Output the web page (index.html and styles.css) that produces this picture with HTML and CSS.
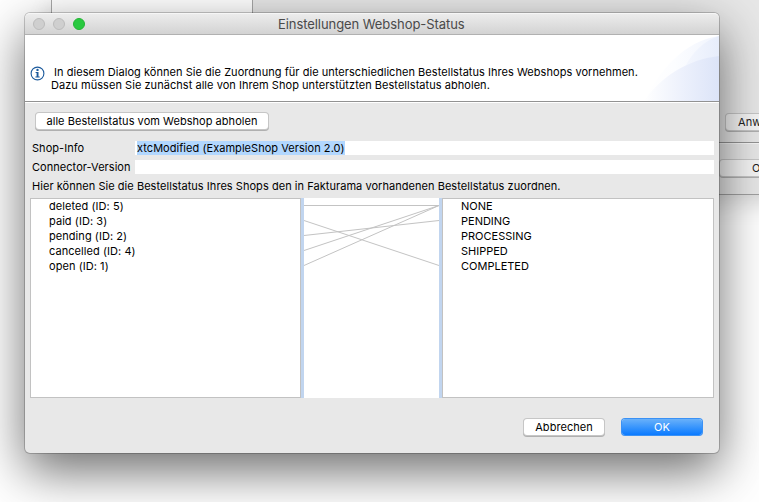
FILE: index.html
```
<!DOCTYPE html>
<html lang="de">
<head>
<meta charset="utf-8">
<title>Einstellungen Webshop-Status</title>
<link rel="stylesheet" href="styles.css">
</head>
<body>
<div class="desktop">
  <div class="parent">
    <div class="parent-side"></div>
    <div class="parent-main">
      <div class="parent-top"><span class="btn back-btn">Anwenden</span></div>
      <div class="parent-bottom"><span class="btn back-btn back-ok">OK</span></div>
    </div>
  </div>
  <main class="window">
    <header class="titlebar">
      <i class="light"></i><i class="light"></i><i class="light zoom"></i>
      <h1><span class="t-title">Einstellungen Webshop-Status</span></h1>
    </header>
    <section class="banner">
      <svg class="swoosh" width="80" height="66" viewBox="0 0 80 66">
        <defs>
          <linearGradient id="a"><stop offset="0" stop-color="#fff"/><stop offset=".4" stop-color="#fcfdff"/><stop offset="1" stop-color="#f0f4fd"/></linearGradient>
          <linearGradient id="b"><stop offset="0" stop-color="#f4f7fe"/><stop offset="1" stop-color="#e7edfb"/></linearGradient>
          <linearGradient id="c"><stop offset="0" stop-color="#fff"/><stop offset=".5" stop-color="#edf1fc"/><stop offset="1" stop-color="#dce4f8"/></linearGradient>
        </defs>
        <path d="M5 66C20 36 45 6 80 1V66Z" fill="url(#a)"/>
        <path d="M46 32C53 18 64 6 80 1V32Z" fill="url(#b)"/>
        <path d="M5 66C22 42 47 25 80 21V66Z" fill="url(#c)"/>
      </svg>
      <svg class="info" width="15" height="15" viewBox="0 0 15 15">
        <circle cx="7.5" cy="7.5" r="6.4" fill="#fff" stroke="#1c5a9c" stroke-width="1.1"/>
        <circle cx="7.5" cy="3.9" r="1.2" fill="#1c5a9c"/>
        <path d="M5.6 6.1H8.5V10.6H9.7V11.6H5.4V10.6H6.6V7H5.6Z" fill="#1c5a9c"/>
      </svg>
      <p><span class="l1">In diesem Dialog können Sie die Zuordnung für die unterschiedlichen Bestellstatus Ihres Webshops vornehmen.</span><br><span class="l2">Dazu müssen Sie zunächst alle von Ihrem Shop unterstützten Bestellstatus abholen.</span></p>
    </section>
    <section class="content">
      <span class="btn fetch"><span>alle Bestellstatus vom Webshop abholen</span></span>
      <div class="field"><label>Shop-Info</label><div class="input"><mark>xtcModified (ExampleShop Version 2.0)</mark></div></div>
      <div class="field"><label class="conn">Connector-Version</label><div class="input"></div></div>
      <p class="hint"><span>Hier können Sie die Bestellstatus Ihres Shops den in Fakturama vorhandenen Bestellstatus zuordnen.</span></p>
      <div class="mapping">
        <ul class="list">
          <li>deleted (ID: 5)</li><li>paid (ID: 3)</li><li>pending (ID: 2)</li><li>cancelled (ID: 4)</li><li>open (ID: 1)</li>
        </ul>
        <div class="links">
          <svg width="135" height="200" viewBox="0 0 135 200">
            <path d="M0 7.5H135M0 22.5L135 67.5M0 37.5L135 22.5M0 52.5L135 7.5M0 67.5L135 7.5" fill="none" stroke="#c3c3c3"/>
          </svg>
        </div>
        <ul class="list target">
          <li>NONE</li><li>PENDING</li><li>PROCESSING</li><li>SHIPPED</li><li>COMPLETED</li>
        </ul>
      </div>
      <footer><span class="btn">Abbrechen</span><span class="btn ok">OK</span></footer>
    </section>
  </main>
</div>
</body>
</html>
```
FILE: styles.css
```
* { box-sizing: border-box; }
body { margin: 0; font: 11px/13px Inter, "Liberation Sans", sans-serif; letter-spacing: .045px; color: #000; }
.desktop { position: relative; width: 759px; height: 502px; overflow: hidden; background: #fff; }
.parent { display: flex; width: 900px; height: 195px; margin-left: 51px; border-bottom: 1px solid #a0a0a0; border-left: 1px solid #a8a8a8; box-shadow: 0 8px 22px rgba(0,0,0,.16); }
.parent-side { width: 201px; background: #fff; border-right: 1px solid #a6a6a6; }
.parent-main { flex: 1; background: #e7e7e7; }
.parent-top { height: 143px; padding: 114px 0 0 473px; border-bottom: 1px solid #949494; }
.parent-bottom { padding: 16px 0 0 467px; border-top: 1px solid #f6f6f6; }
.btn { display: flex; align-items: center; justify-content: center; width: 80px; height: 16px; background: #fff; border-radius: 3px; box-shadow: 0 0 0 1px #c6c6c6, 0 1px 0 1px #b0b0b0; }
.back-btn { justify-content: flex-start; padding-left: 12px; background: #f5f5f5; color: #222; }
.back-ok { padding-left: 32px; }
.window { position: absolute; left: 25px; top: 13px; width: 694px; height: 440px; border-radius: 5px; background: #e8e8e8; box-shadow: 0 0 0 1px rgba(0,0,0,.2), 0 18px 50px rgba(0,0,0,.58); }
.titlebar { display: flex; align-items: center; height: 22px; padding-left: 8px; gap: 8px; background: linear-gradient(#ececec, #d3d3d3); border-top: 1px solid #f6f6f6; border-bottom: 1px solid #b1b1b1; border-radius: 5px 5px 0 0; }
.light { flex: none; width: 12px; height: 12px; border: 1px solid #bcbcbc; border-radius: 50%; background: #cfcfcf; }
.zoom { border-color: #23b534; background: #29c940; }
h1 { flex: 1; margin: 0 0 0 185px; font-size: 13px; line-height: 20px; font-weight: 400; letter-spacing: -.07px; color: #4a4a4a; white-space: nowrap; }
.banner { position: relative; display: flex; height: 67px; background: #fff; border-bottom: 1px solid #929292; padding: 31px 0 0 5px; }
.swoosh { position: absolute; right: 0; top: 0; }
.info { flex: none; margin-right: 6px; }
.banner p { position: relative; margin: 0; white-space: nowrap; }
.l1 { margin-left: 3px; }
.content { border-top: 1px solid #fff; padding: 10px 5px 0; }
.fetch { width: 232px; margin-left: 6px; }
.field { display: flex; height: 14px; margin-top: 5px; }
.fetch + .field { margin-top: 12px; }
.field label { width: 105px; padding-left: 2px; line-height: 14px; white-space: nowrap; }
.input { flex: 1; background: #fff; padding-left: 2px; display: flex; }
mark { background: #b2d7fe; color: #000; line-height: 14px; height: 14px; }
.hint { margin: 5px 0 0 2px; line-height: 15px; white-space: nowrap; }
.mapping { display: flex; height: 200px; margin-top: 4px; }
.list { width: 271px; margin: 0; padding: 0 0 0 18px; border: 1px solid #c2c2c2; background: #fff; list-style: none; line-height: 15px; letter-spacing: .06px; }
.target { flex: 1; letter-spacing: 0; }
.links { width: 141px; border: solid #c1d5ef; border-width: 0 3px; background: #fff; }
.links svg { display: block; }
footer { display: flex; justify-content: flex-end; gap: 18px; margin-top: 21px; padding-right: 12px; }
.ok { color: #fff; background: linear-gradient(#69b1fa, #0a7aff); box-shadow: 0 0 0 1px #3a91f5; }
```
